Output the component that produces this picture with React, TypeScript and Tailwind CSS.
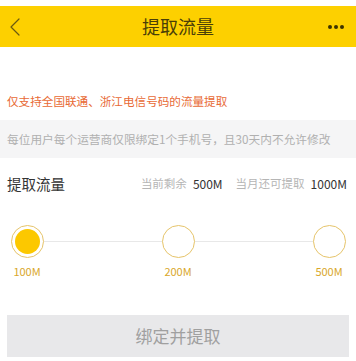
const font = { fontFamily: '"Noto Sans CJK SC", "Noto Sans", sans-serif' };

const options = [
    { label: "100M", active: true },
    { label: "200M", active: false },
    { label: "500M", active: false },
];

const App = () => {
    return (
        <div className="w-[356px] h-[361px] bg-white overflow-hidden" style={font}>
            <div className="pt-[6px]">
                <div className="relative flex items-center justify-between h-[41px] bg-[#fdd000] pl-[9px] pr-[8px]">
                    <svg width="12" height="18" viewBox="0 0 12 18" fill="none">
                        <polyline points="10,1 2,9 10,17" stroke="#6b5a10" strokeWidth="1.2" strokeLinecap="round" strokeLinejoin="round" />
                    </svg>
                    <span className="absolute left-1/2 -translate-x-1/2 text-[18px] text-[#4a3e08]">提取流量</span>
                    <span className="flex gap-[2px] mr-[4px]">
                        <span className="w-[4px] h-[4px] rounded-full bg-[#3d3300]"></span>
                        <span className="w-[4px] h-[4px] rounded-full bg-[#3d3300]"></span>
                        <span className="w-[4px] h-[4px] rounded-full bg-[#3d3300]"></span>
                    </span>
                </div>
            </div>

            <p className="mt-[46px] px-[7px] text-[11.6px] leading-[16px] text-[#e86a35]">仅支持全国联通、浙江电信号码的流量提取</p>

            <div className="mt-[11px] h-[38px] flex items-center px-[7px] bg-[#f5f5f6]">
                <p className="text-[11.7px] text-[#b0b0b0] whitespace-nowrap">每位用户每个运营商仅限绑定1个手机号，且30天内不允许修改</p>
            </div>

            <div className="mt-[16px] flex items-center justify-between pl-[7px] pr-[9px] h-[20px]">
                <span className="text-[14.5px] text-[#333]">提取流量</span>
                <span className="text-[11.5px] text-[#b5b5b5] flex items-center">
                    当前剩余<span className="ml-[6px] text-[12px] text-[#333]">500M</span>
                    <span className="ml-[13px]">当月还可提取</span><span className="ml-[6px] text-[12px] text-[#333]">1000M</span>
                </span>
            </div>

            <div className="relative mt-[31px] px-[10px] flex justify-between">
                <div className="absolute left-[27px] right-[27px] top-[16px] h-px bg-[#e8e8e8]"></div>
                {options.map((opt) => (
                    <div key={opt.label} className="relative flex flex-col items-center w-[34px]">
                        <div className="w-[33px] h-[33px] rounded-full border border-[#e6c46a] bg-white flex items-center justify-center">
                            {opt.active && <div className="w-[25px] h-[25px] rounded-full bg-[#fcc800]"></div>}
                        </div>
                        <span className="mt-[6px] text-[11px] leading-[14px] text-[#d9a72a]">{opt.label}</span>
                    </div>
                ))}
            </div>

            <div className="mx-[7px] mt-[37px] h-[42px] bg-[#e8e8ea] flex items-center justify-center">
                <span className="text-[17px] text-[#a0a0a0]">绑定并提取</span>
            </div>
        </div>
    );
};

export default App;
